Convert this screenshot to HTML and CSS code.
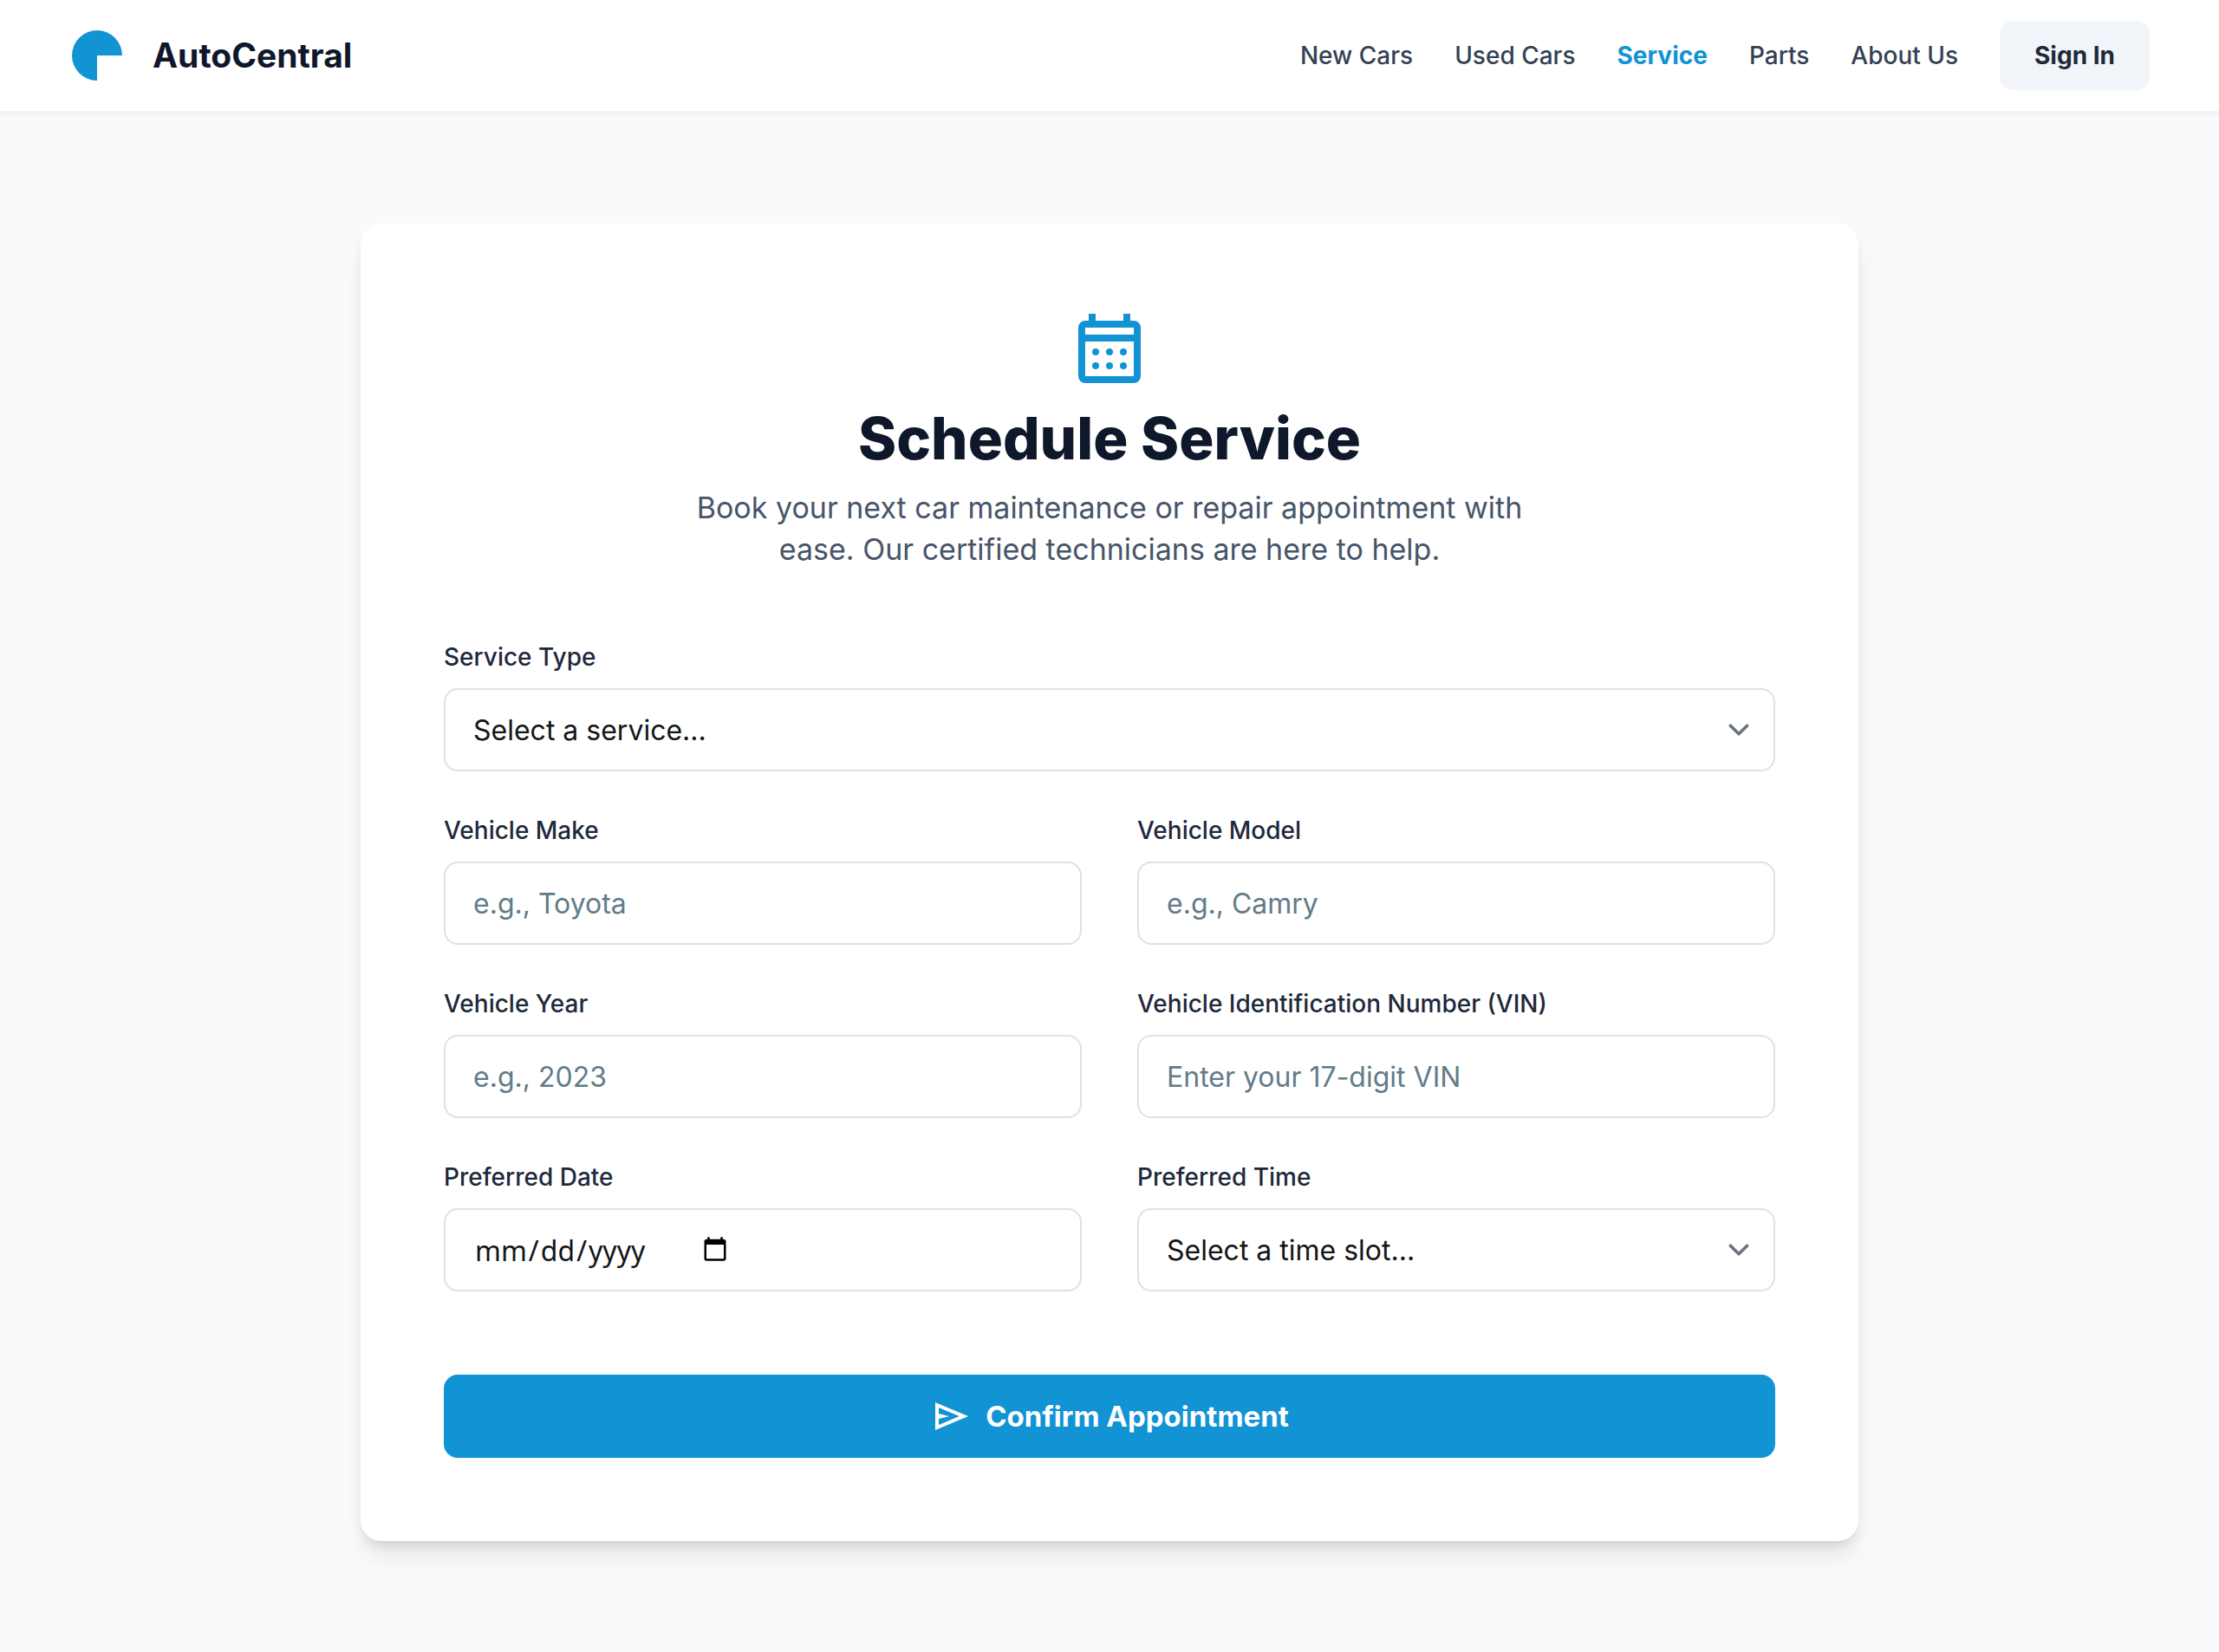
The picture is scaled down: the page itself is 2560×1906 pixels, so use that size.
FILE: index.html
```html
<!DOCTYPE html>
<html lang="en">
<head>
  <meta charset="utf-8">
  <meta name="viewport" content="width=device-width, initial-scale=1">
  <title>AutoCentral - Schedule Service</title>
  <link rel="stylesheet" href="styles.css">
</head>
<body>
  <header class="topbar">
    <a class="brand" href="#">
      <svg class="brand-mark" viewBox="0 0 64 64" aria-hidden="true"><path d="M32 3a29 29 0 1 0 0 58V32h29A29 29 0 0 0 32 3Z"/></svg>
      <span>AutoCentral</span>
    </a>
    <nav class="nav">
      <a class="nav-link" href="#">New Cars</a>
      <a class="nav-link" href="#">Used Cars</a>
      <a class="nav-link nav-link-active" href="#" aria-current="page">Service</a>
      <a class="nav-link" href="#">Parts</a>
      <a class="nav-link" href="#">About Us</a>
      <button class="sign-in" type="button">Sign In</button>
    </nav>
  </header>

  <main class="page">
    <section class="card">
      <div class="intro">
        <svg class="intro-icon" viewBox="0 0 24 24" aria-hidden="true">
          <path fill-rule="evenodd" d="M6 2h2v2h8V2h2v2h1a2 2 0 0 1 2 2v14a2 2 0 0 1-2 2H5a2 2 0 0 1-2-2V6a2 2 0 0 1 2-2h1ZM5 6v2h14V6ZM5 10v10h14V10Z"/>
          <circle cx="8" cy="13" r="1"/><circle cx="12" cy="13" r="1"/><circle cx="16" cy="13" r="1"/>
          <circle cx="8" cy="17" r="1"/><circle cx="12" cy="17" r="1"/><circle cx="16" cy="17" r="1"/>
        </svg>
        <h1 class="title">Schedule Service</h1>
        <p class="lead">Book your next car maintenance or repair appointment with ease. Our certified technicians are here to help.</p>
      </div>

      <form class="form">
        <div class="field field-wide">
          <label class="label" for="service">Service Type</label>
          <div class="select-wrap">
            <select class="control select" id="service"><option>Select a service...</option></select>
            <svg class="chevron" viewBox="0 0 20 20" aria-hidden="true"><path d="m6 8 4 4 4-4"/></svg>
          </div>
        </div>
        <div class="field">
          <label class="label" for="make">Vehicle Make</label>
          <input class="control" id="make" type="text" placeholder="e.g., Toyota">
        </div>
        <div class="field">
          <label class="label" for="model">Vehicle Model</label>
          <input class="control" id="model" type="text" placeholder="e.g., Camry">
        </div>
        <div class="field">
          <label class="label" for="year">Vehicle Year</label>
          <input class="control" id="year" type="text" placeholder="e.g., 2023">
        </div>
        <div class="field">
          <label class="label" for="vin">Vehicle Identification Number (VIN)</label>
          <input class="control" id="vin" type="text" placeholder="Enter your 17-digit VIN">
        </div>
        <div class="field">
          <label class="label" for="date">Preferred Date</label>
          <input class="control date" id="date" type="date">
        </div>
        <div class="field">
          <label class="label" for="time">Preferred Time</label>
          <div class="select-wrap">
            <select class="control select" id="time"><option>Select a time slot...</option></select>
            <svg class="chevron" viewBox="0 0 20 20" aria-hidden="true"><path d="m6 8 4 4 4-4"/></svg>
          </div>
        </div>
        <button class="submit" type="submit">
          <svg class="submit-icon" viewBox="0 -960 960 960" aria-hidden="true"><path d="M120-160v-640l760 320-760 320Zm80-120 474-200-474-200v140l240 60-240 60v140Z"/></svg>
          <span>Confirm Appointment</span>
        </button>
      </form>
    </section>
  </main>
</body>
</html>
```
FILE: styles.css
```css
* {
  box-sizing: border-box;
}

body {
  margin: 0;
  min-height: 100vh;
  background: #f8fafc;
  color: #0f172a;
  font-family: Inter, "Liberation Sans", sans-serif;
}

button,
input,
select {
  font-family: inherit;
}

.topbar {
  display: flex;
  align-items: center;
  justify-content: space-between;
  padding: 24px 80px;
  background: #fff;
  border-bottom: 2px solid #f1f5f9;
  box-shadow: 0 2px 4px rgba(0, 0, 0, 0.05);
}

.brand {
  display: flex;
  align-items: center;
  gap: 32px;
  color: #0f172a;
  font-size: 39px;
  font-weight: 700;
  line-height: 48px;
  text-decoration: none;
}

.brand-mark {
  width: 64px;
  height: 64px;
  fill: #1193d4;
}

.nav {
  display: flex;
  align-items: center;
  gap: 48px;
}

.nav-link {
  color: #334155;
  font-size: 28px;
  font-weight: 500;
  line-height: 40px;
  text-decoration: none;
}

.nav-link-active {
  color: #1193d4;
  font-weight: 700;
}

.sign-in {
  padding: 20px 40px;
  border: 0;
  border-radius: 16px;
  background: #f1f5f9;
  color: #1e293b;
  font-size: 28px;
  font-weight: 700;
  line-height: 40px;
}

.page {
  padding: 128px 64px;
}

.card {
  max-width: 1728px;
  margin: 0 auto;
  padding: 96px;
  border-radius: 24px;
  background: #fff;
  box-shadow: 0 20px 30px -6px rgba(0, 0, 0, 0.1), 0 8px 12px -4px rgba(0, 0, 0, 0.1);
}

.intro {
  display: flex;
  flex-direction: column;
  align-items: center;
  text-align: center;
}

.intro-icon {
  width: 96px;
  height: 96px;
  fill: #1193d4;
}

.title {
  margin: 18px 0 18px;
  font-size: 67px;
  font-weight: 800;
  line-height: 76px;
}

.lead {
  max-width: 1000px;
  margin: 0;
  color: #475569;
  font-size: 34px;
  line-height: 48px;
}

.form {
  display: grid;
  grid-template-columns: 1fr 1fr;
  gap: 48px 64px;
  margin-top: 80px;
}

.field {
  display: flex;
  flex-direction: column;
  gap: 16px;
  min-width: 0;
}

.field-wide {
  grid-column: 1 / -1;
}

.label {
  color: #1e293b;
  font-size: 28px;
  font-weight: 500;
  line-height: 40px;
}

.control {
  width: 100%;
  height: 96px;
  padding: 0 32px;
  border: 2px solid #dbe2e6;
  border-radius: 16px;
  background: #fff;
  color: #111618;
  font-size: 32px;
}

.control::placeholder {
  color: #617c89;
  opacity: 1;
}

.date {
  font-family: "Noto Sans", sans-serif;
}

.date::-webkit-datetime-edit {
  flex: none;
}

.date::-webkit-datetime-edit-month-field,
.date::-webkit-datetime-edit-day-field,
.date::-webkit-datetime-edit-year-field {
  padding: 0 2px;
}

.date::-webkit-calendar-picker-indicator {
  margin-inline-start: 22px;
}

.select-wrap {
  display: grid;
  align-items: center;
}

.select {
  grid-area: 1 / 1;
  appearance: none;
}

.chevron {
  grid-area: 1 / 1;
  justify-self: end;
  width: 48px;
  height: 48px;
  margin-right: 18px;
  fill: none;
  stroke: #6b7280;
  stroke-width: 1.5;
  stroke-linecap: round;
  stroke-linejoin: round;
  pointer-events: none;
}

.submit {
  grid-column: 1 / -1;
  display: flex;
  align-items: center;
  justify-content: center;
  gap: 16px;
  height: 96px;
  margin-top: 48px;
  border: 0;
  border-radius: 16px;
  background: #1193d4;
  color: #fff;
  font-size: 33px;
  font-weight: 700;
  line-height: 48px;
}

.submit-icon {
  width: 48px;
  height: 48px;
  fill: currentColor;
}
```
